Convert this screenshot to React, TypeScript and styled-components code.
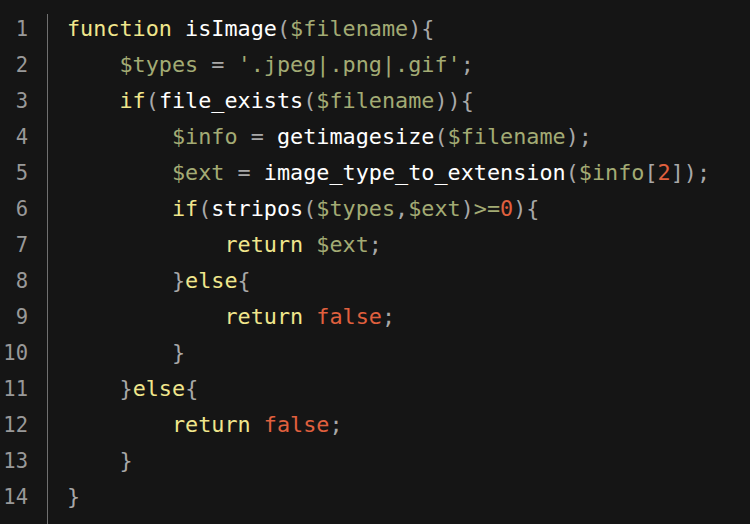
import React from "react";
import styled, { createGlobalStyle } from "styled-components";

const Global = createGlobalStyle`
  html, body { margin: 0; padding: 0; background: #151515; }
  body { width: 750px; height: 524px; overflow: hidden; }
`;

const Editor = styled.div`
  display: flex;
  width: 750px;
  height: 524px;
  background: #151515;
  padding-top: 14px;
  box-sizing: border-box;
`;

const Gutter = styled.div`
  width: 48px;
  box-sizing: border-box;
  padding-right: 19px;
  margin-top: 0;
  border-right: 1px solid #707070;
  display: flex;
  flex-direction: column;
  align-items: flex-end;
`;

const Numbers = styled.div`
  margin-top: -3px;
  display: flex;
  flex-direction: column;
  align-items: flex-end;
`;

const LineNo = styled.div`
  height: 36px;
  line-height: 36px;
  font-family: "DejaVu Sans Mono", monospace;
  font-size: 20.5px;
  color: #999999;
`;

const Code = styled.div`
  flex: 1;
  margin-top: -3px;
  padding-left: 19px;
  display: flex;
  flex-direction: column;
`;

const Line = styled.div`
  height: 36px;
  line-height: 36px;
  white-space: pre;
  font-family: "DejaVu Sans Mono", monospace;
  font-size: 21.8px;
  color: #a8a8a8;
`;

type Kind = "kw" | "fn" | "var" | "p" | "num";
const colors: Record<Kind, string> = {
  kw: "#f0e68c",
  fn: "#ffffff",
  var: "#a3ab74",
  p: "#a8a8a8",
  num: "#e0603e",
};

const Tok = styled.span<{ $k: Kind }>`
  color: ${(p) => colors[p.$k]};
`;

type T = [Kind, string];
const lines: T[][] = [
  [["kw", "function"], ["p", " "], ["fn", "isImage"], ["p", "("], ["var", "$filename"], ["p", "){"]],
  [["p", "    "], ["var", "$types"], ["p", " = "], ["var", "'.jpeg|.png|.gif'"], ["p", ";"]],
  [["p", "    "], ["kw", "if"], ["p", "("], ["fn", "file_exists"], ["p", "("], ["var", "$filename"], ["p", ")){"]],
  [["p", "        "], ["var", "$info"], ["p", " = "], ["fn", "getimagesize"], ["p", "("], ["var", "$filename"], ["p", ");"]],
  [["p", "        "], ["var", "$ext"], ["p", " = "], ["fn", "image_type_to_extension"], ["p", "("], ["var", "$info"], ["p", "["], ["num", "2"], ["p", "]);"]],
  [["p", "        "], ["kw", "if"], ["p", "("], ["fn", "stripos"], ["p", "("], ["var", "$types"], ["p", ","], ["var", "$ext"], ["p", ")"], ["var", ">="], ["num", "0"], ["p", "){"]],
  [["p", "            "], ["kw", "return"], ["p", " "], ["var", "$ext"], ["p", ";"]],
  [["p", "        }"], ["kw", "else"], ["p", "{"]],
  [["p", "            "], ["kw", "return"], ["p", " "], ["num", "false"], ["p", ";"]],
  [["p", "        }"]],
  [["p", "    }"], ["kw", "else"], ["p", "{"]],
  [["p", "        "], ["kw", "return"], ["p", " "], ["num", "false"], ["p", ";"]],
  [["p", "    }"]],
  [["p", "}"]],
];

export default function App() {
  return (
    <>
      <Global />
      <Editor>
        <Gutter>
          <Numbers>
            {lines.map((_, i) => (
              <LineNo key={i}>{i + 1}</LineNo>
            ))}
          </Numbers>
        </Gutter>
        <Code>
          {lines.map((toks, i) => (
            <Line key={i}>
              {toks.map(([k, t], j) => (
                <Tok key={j} $k={k}>
                  {t}
                </Tok>
              ))}
            </Line>
          ))}
        </Code>
      </Editor>
    </>
  );
}
